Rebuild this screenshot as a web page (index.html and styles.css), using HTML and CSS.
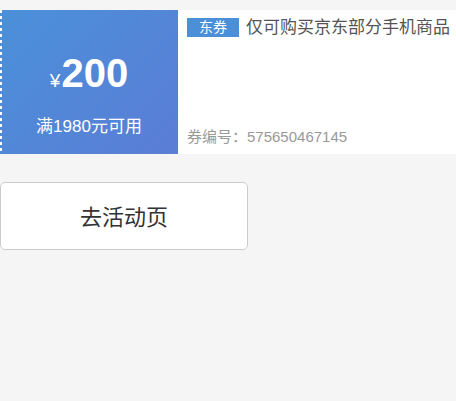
FILE: index.html
```html
<!DOCTYPE html>
<html lang="zh-CN">
<head>
  <meta charset="UTF-8" />
  <meta name="viewport" content="width=device-width, initial-scale=1.0"/>
  <title>优惠券</title>
  <link rel="stylesheet" href="styles.css">
</head>
<body>
  <div class="coupon">
    <div class="coupon-left">
      <p class="amount"><span class="yen">¥</span>200</p>
      <p class="limit">满1980元可用</p>
    </div>
    <div class="coupon-right">
      <p class="title"><span class="tag">东券</span>仅可购买京东部分手机商品</p>
      <p class="code">券编号：575650467145</p>
    </div>
  </div>

  <button class="go-btn">去活动页</button>
</body>
</html>
```

FILE: styles.css
```css
body {
  margin: 0;
  padding: 10px 0 0;
  background: #f5f5f5;
  font-family: "Liberation Sans", "Noto Sans CJK SC", sans-serif;
}

p {
  margin: 0;
}

.coupon {
  display: flex;
  height: 144px;
  background: #fff;
}

.coupon-left {
  position: relative;
  width: 178px;
  display: flex;
  flex-direction: column;
  align-items: center;
  padding-top: 41px;
  box-sizing: border-box;
  color: #fff;
  background: linear-gradient(135deg, #4a90d9, #5b7dd6);
}

/* 左侧锯齿边 */
.coupon-left::before {
  content: "";
  position: absolute;
  left: 0;
  top: 0;
  bottom: 0;
  width: 2px;
  background: repeating-linear-gradient(to bottom, #fff 0, #fff 3px, transparent 3px, transparent 6px);
}

.amount {
  font-size: 40px;
  font-weight: bold;
  line-height: 44px;
}

.amount .yen {
  font-size: 19px;
  font-weight: normal;
  margin-right: 1px;
}

.limit {
  font-size: 17px;
  line-height: 24px;
  margin-top: 12px;
}

.coupon-right {
  flex: 1;
  display: flex;
  flex-direction: column;
  justify-content: space-between;
  padding: 7px 0 8px 9px;
}

.title {
  font-size: 17px;
  color: #555;
  line-height: 22px;
  white-space: nowrap;
}

.tag {
  display: inline-block;
  background: #4a8fd7;
  color: #fff;
  font-size: 14px;
  line-height: 19px;
  padding: 0 12px;
  margin: 1px 7px 0 0;
  vertical-align: top;
}

.code {
  font-size: 15px;
  color: #999;
}

.go-btn {
  display: block;
  margin-top: 28px;
  width: 248px;
  height: 68px;
  background: #fff;
  border: 1px solid #ccc;
  border-radius: 5px;
  font-family: "Liberation Sans", "Noto Sans CJK SC", sans-serif;
  font-size: 22px;
  color: #333;
  padding-bottom: 4px;
}
```
